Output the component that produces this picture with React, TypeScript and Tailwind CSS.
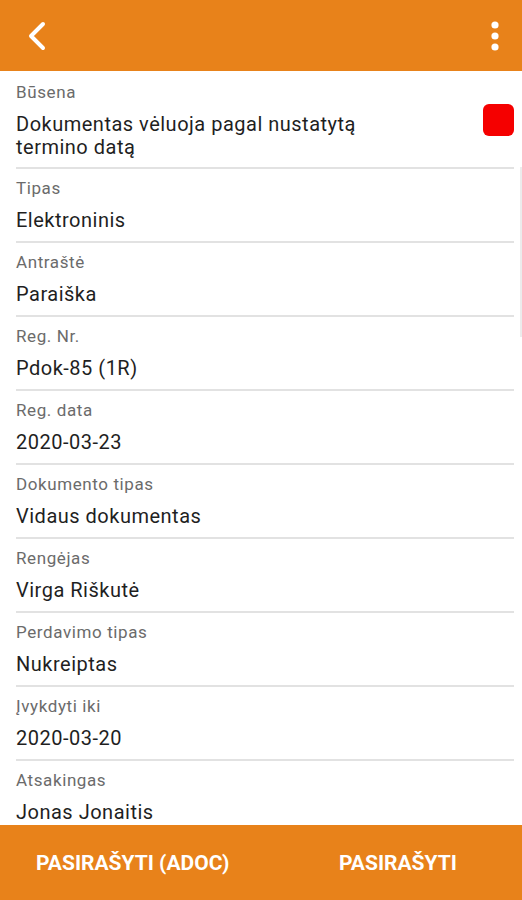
import React from "react";

const rows: { label: string; value: string }[] = [
  { label: "Tipas", value: "Elektroninis" },
  { label: "Antraštė", value: "Paraiška" },
  { label: "Reg. Nr.", value: "Pdok-85 (1R)" },
  { label: "Reg. data", value: "2020-03-23" },
  { label: "Dokumento tipas", value: "Vidaus dokumentas" },
  { label: "Rengėjas", value: "Virga Riškutė" },
  { label: "Perdavimo tipas", value: "Nukreiptas" },
  { label: "Įvykdyti iki", value: "2020-03-20" },
  { label: "Atsakingas", value: "Jonas Jonaitis" },
];

export default function App() {
  return (
    <div
      className="w-[522px] h-[900px] flex flex-col bg-white overflow-hidden"
      style={{ fontFamily: "Roboto, 'Noto Sans', sans-serif" }}
    >
      <header className="h-[71px] shrink-0 bg-[#e8821a] flex items-center justify-between pl-[26px] pr-[22px]">
        <svg width="22" height="32" viewBox="0 0 22 32" fill="none">
          <path
            d="M17 4 L5 16 L17 28"
            stroke="white"
            strokeWidth="4"
            strokeLinecap="round"
            strokeLinejoin="round"
          />
        </svg>
        <svg width="10" height="32" viewBox="0 0 10 32" fill="white">
          <circle cx="5" cy="5" r="3.6" />
          <circle cx="5" cy="16" r="3.6" />
          <circle cx="5" cy="27" r="3.6" />
        </svg>
      </header>

      <main className="relative flex-1 overflow-hidden">
        <div className="absolute right-[0px] top-[96px] w-[2px] h-[170px] bg-[#ececec]" />
        <div className="ml-4 mr-2">
          <div className="flex items-start justify-between border-b-2 border-[#e2e2e2] pt-[11px] pb-[8px]">
            <div className="flex flex-col">
              <div className="text-[17px] leading-[20px] tracking-[0.6px] text-[#6b6b6b]">Būsena</div>
              <div className="mt-[11px] text-[20px] leading-[23px] tracking-[0.5px] text-[#1f1f1f] w-[380px]">
                Dokumentas vėluoja pagal nustatytą termino datą
              </div>
            </div>
            <div className="mt-[22px] w-[31px] h-[32px] rounded-[6px] bg-[#f50000]" />
          </div>
          {rows.map((r, i) => (
            <div
              key={r.label}
              className={`flex flex-col pt-[9px] pb-[9px] ${i < rows.length - 1 ? "border-b-2 border-[#e2e2e2]" : ""}`}
            >
              <div className="text-[17px] leading-[20px] tracking-[0.6px] text-[#6b6b6b]">{r.label}</div>
              <div className="mt-[10px] text-[20px] leading-[24px] tracking-[0.5px] text-[#1f1f1f]">{r.value}</div>
            </div>
          ))}
        </div>
      </main>

      <footer className="h-[75px] shrink-0 bg-[#e8821a] flex items-center text-white font-bold text-[21px] pt-[2px]">
        <div className="pl-[36px] w-[339px]">PASIRAŠYTI (ADOC)</div>
        <div>PASIRAŠYTI</div>
      </footer>
    </div>
  );
}
